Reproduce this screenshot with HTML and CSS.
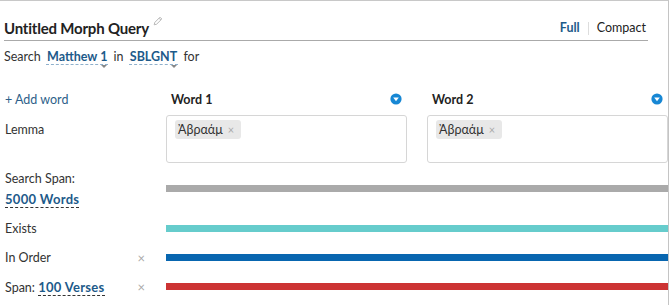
FILE: index.html
```html
<!DOCTYPE html>
<html lang="en">
<head>
  <meta charset="UTF-8">
  <title>Untitled Morph Query</title>
  <link rel="stylesheet" href="styles.css">
</head>
<body>
  <div class="query">
    <header class="query-head">
      <h1 class="title">Untitled Morph Query
        <svg class="pencil" width="10" height="10" viewBox="0 0 10 10"><path d="M1.2 8.8 L1.8 6.4 L7 1.2 L8.8 3 L3.6 8.2 Z M6 2.2 L7.8 4" fill="none" stroke="#b8b8b8" stroke-width="1"/></svg>
      </h1>
      <nav class="view-toggle">
        <a class="active">Full</a>
        <span class="sep"></span>
        <a>Compact</a>
      </nav>
    </header>

    <div class="search-line">
      Search <span class="picker">Matthew 1</span> in <span class="picker">SBLGNT</span> for
    </div>

    <div class="grid">
      <div class="label add-word">+ Add word</div>
      <div class="word-head col-a">Word 1
        <svg width="12" height="12" viewBox="0 0 12 12"><circle cx="6" cy="6" r="5.6" fill="#1787d4"/><path d="M3.2 4.6 H8.8 L6 8.2 Z" fill="#fff"/></svg>
      </div>
      <div class="word-head col-b">Word 2
        <svg width="12" height="12" viewBox="0 0 12 12"><circle cx="6" cy="6" r="5.6" fill="#1787d4"/><path d="M3.2 4.6 H8.8 L6 8.2 Z" fill="#fff"/></svg>
      </div>

      <div class="label top">Lemma</div>
      <div class="term-box col-a"><span class="chip">Ἀβραάμ <span class="chip-x">×</span></span></div>
      <div class="term-box col-b"><span class="chip">Ἀβραάμ <span class="chip-x">×</span></span></div>

      <div class="label stacked">
        <span>Search Span:</span>
        <span><a class="link">5000 Words</a></span>
      </div>
      <div class="bar gray"></div>

      <div class="label">Exists</div>
      <div class="bar teal"></div>

      <div class="label">In Order <span class="remove">×</span></div>
      <div class="bar blue"></div>

      <div class="label"><span>Span: <a class="link">100 Verses</a></span> <span class="remove">×</span></div>
      <div class="bar red"></div>
    </div>
  </div>
</body>
</html>
```

FILE: styles.css
```css
body {
    margin: 0;
    font-family: Lato, "Noto Sans", sans-serif;
    font-size: 12.5px;
    color: #333;
    background: #fff;
}
.query {
    width: 668px;
    height: 304px;
    border-top: 1px solid #c8c8c8;
    border-right: 1px solid #c4c4c4;
}
.query-head {
    display: flex;
    justify-content: space-between;
    align-items: flex-end;
    height: 37px;
    padding-bottom: 2px;
    margin: 0 20px 0 4px;
    border-bottom: 1px solid #aaa;
}
.title {
    margin: 0;
    font-size: 15px;
    line-height: 20px;
    font-weight: 700;
    letter-spacing: -0.2px;
    color: #222;
}
.pencil {
    vertical-align: 8px;
    margin-left: 1px;
}
.view-toggle {
    display: flex;
    align-items: center;
    gap: 8px;
    padding-right: 2px;
    font-size: 12.5px;
    line-height: 20px;
}
.view-toggle a {
    color: #222;
}
.view-toggle a.active {
    color: #1d5a8a;
    font-weight: 700;
}
.sep {
    width: 1px;
    height: 13px;
    background: #ddd;
}
.search-line {
    margin-top: 6px;
    padding-left: 4px;
    line-height: 20px;
}
.picker {
    position: relative;
    margin: 0 2px;
    padding: 0 1px;
    color: #1d5a8a;
    font-weight: 700;
    border-bottom: 1px dashed #8fb0cc;
}
.picker::after {
    content: "";
    position: absolute;
    right: 1px;
    bottom: -4px;
    border: 3px solid transparent;
    border-top-color: #888;
    border-bottom: 0;
}
.grid {
    display: grid;
    grid-template-columns: 166px 1fr 20px 1fr;
    grid-template-rows: 26px 48px 51px 29px 29px 29px;
    margin-top: 22px;
}
.col-a {
    grid-column: 2;
}
.col-b {
    grid-column: 4;
}
.label {
    grid-column: 1;
    display: flex;
    justify-content: space-between;
    align-items: center;
    padding: 0 21px 0 5px;
}
.label.top {
    align-items: flex-start;
    padding-top: 5px;
    line-height: 20px;
}
.add-word {
    align-self: start;
    height: 20px;
    color: #2d5f8a;
}
.stacked {
    flex-direction: column;
    align-items: flex-start;
    justify-content: center;
    line-height: 21px;
}
.link {
    color: #1d5a8a;
    font-weight: 700;
    font-size: 13px;
    letter-spacing: 0.3px;
    border-bottom: 1px dashed #333;
}
.remove {
    color: #aaa;
    font-size: 13px;
}
.word-head {
    align-self: start;
    height: 20px;
    display: flex;
    justify-content: space-between;
    align-items: center;
    padding: 0 5px;
    font-weight: 700;
    color: #222;
}
.term-box {
    border: 1px solid #d6d6d6;
    border-radius: 3px;
    padding: 4px 8px;
}
.chip {
    display: inline-flex;
    align-items: center;
    gap: 5px;
    height: 19px;
    padding: 0 7px 0 3px;
    background: #e8e8e8;
    border-radius: 3px;
    color: #333;
}
.chip-x {
    color: #aaa;
    font-size: 11px;
}
.bar {
    grid-column: 2 / 5;
    align-self: center;
    height: 7px;
}
.gray { background: #aaaaaa; }
.teal { background: #66cccc; }
.blue { background: #0866b0; }
.red { background: #cc3333; }
```
